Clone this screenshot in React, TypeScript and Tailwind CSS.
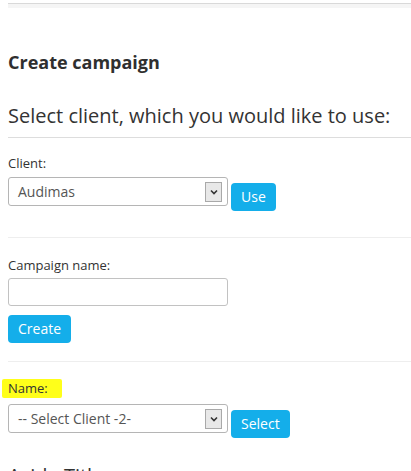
import React from "react";

function FakeSelect({ value }: { value: string }) {
  return (
    <div className="relative flex h-[29px] w-[220px] items-center rounded-[3px] border border-[#b5b5b5] bg-white pl-[9px] text-[14px] text-[#555]">
      <span>{value}</span>
      <span className="absolute right-[5px] top-[4px] flex h-[20px] w-[17px] items-center justify-center border border-[#a9a9a9] bg-[#e8e8e8]">
        <svg width="8" height="6" viewBox="0 0 8 6">
          <path d="M1 1.5 L4 4.5 L7 1.5" fill="none" stroke="#333" strokeWidth="1.6" />
        </svg>
      </span>
    </div>
  );
}

function Btn({ children }: { children: React.ReactNode }) {
  return (
    <button className="h-[28px] rounded-[4px] bg-[#14aeea] px-[10px] text-[14px] leading-none text-white">
      {children}
    </button>
  );
}

export default function App() {
  return (
    <div className="min-h-[471px] overflow-hidden bg-white pl-2 text-[#333]" style={{ fontFamily: '"Open Sans", sans-serif' }}>
      <div className="pt-[3px]">
        <div className="h-[5px] border-t border-[#d9d9d9] bg-[#f5f5f5]" />
      </div>

      <h2 className="mt-[42px] text-[18px] font-bold leading-[24px] text-[#2f2f2f]">Create campaign</h2>

      <h3 className="mt-[28px] text-[20px] font-normal leading-[28px] text-[#333]">
        Select client, which you would like to use:
      </h3>
      <div className="mt-[7px] border-t border-[#ddd]" />

      <div className="mt-[16px] text-[13px] leading-[18px]">Client:</div>
      <div className="mt-[5px] flex items-start gap-[3px]">
        <FakeSelect value="Audimas" />
        <div className="pt-[6px]">
          <Btn>Use</Btn>
        </div>
      </div>
      <div className="mt-[26px] border-t border-[#eee]" />

      <div className="mt-[18px] text-[13px] leading-[18px]">Campaign name:</div>
      <input className="mt-[4px] block h-[28px] w-[220px] rounded-[3px] border border-[#c2c2c2] bg-white px-2 text-[14px] outline-none" />
      <div className="mt-[9px]">
        <Btn>Create</Btn>
      </div>
      <div className="mt-[18px] border-t border-[#eee]" />

      <div className="mt-[17px] -ml-[6px] inline-block rounded-[2px] bg-[#ffff1a] pl-[6px] pr-[14px] text-[13px] leading-[19px]">
        Name:
      </div>
      <div className="mt-[5px] flex items-start gap-[3px]">
        <FakeSelect value="-- Select Client -2-" />
        <div className="pt-[6px]">
          <Btn>Select</Btn>
        </div>
      </div>

      <div className="mt-[24px] text-[20px] leading-[28px]">Aside Title</div>
    </div>
  );
}
